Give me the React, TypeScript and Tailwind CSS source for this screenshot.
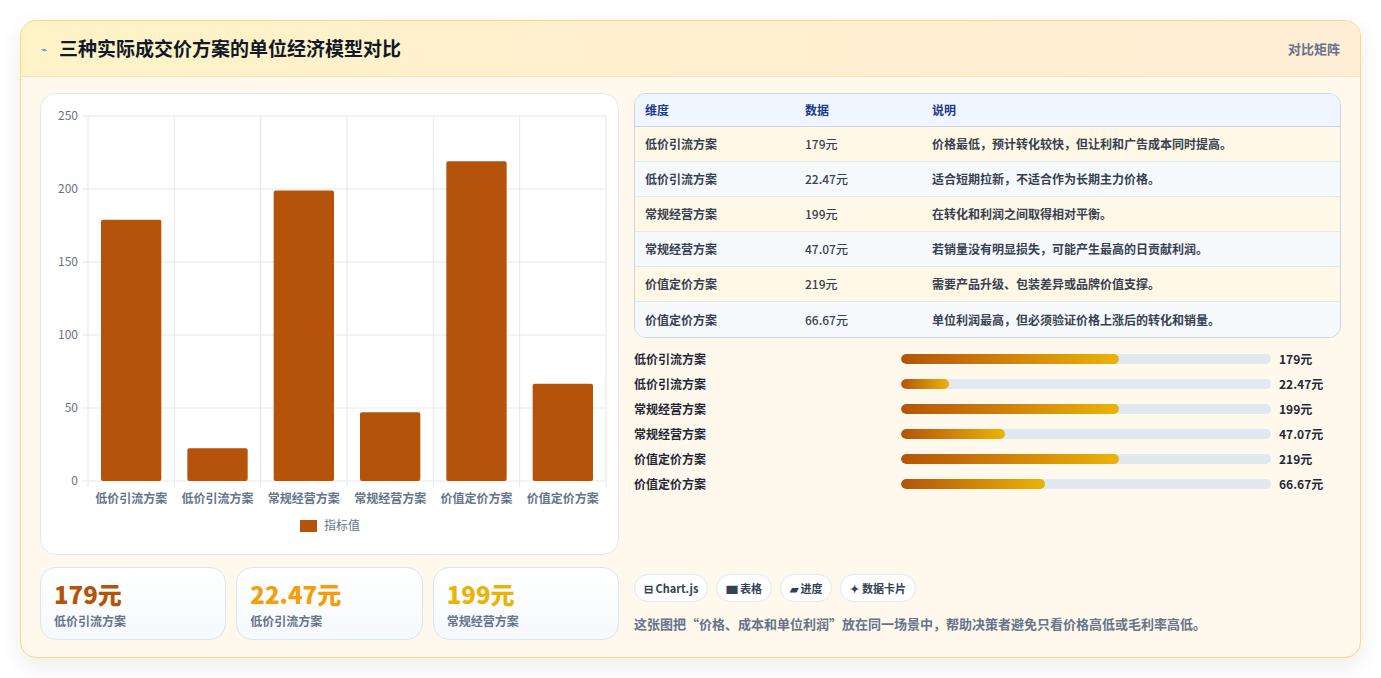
import React from 'react';

const font = { fontFamily: '"Noto Sans CJK SC", "Noto Sans", sans-serif' };

const rows = [
  { name: '低价引流方案', value: '179元', note: '价格最低，预计转化较快，但让利和广告成本同时提高。', n: 179, pct: 59 },
  { name: '低价引流方案', value: '22.47元', note: '适合短期拉新，不适合作为长期主力价格。', n: 22.47, pct: 13 },
  { name: '常规经营方案', value: '199元', note: '在转化和利润之间取得相对平衡。', n: 199, pct: 59 },
  { name: '常规经营方案', value: '47.07元', note: '若销量没有明显损失，可能产生最高的日贡献利润。', n: 47.07, pct: 28 },
  { name: '价值定价方案', value: '219元', note: '需要产品升级、包装差异或品牌价值支撑。', n: 219, pct: 59 },
  { name: '价值定价方案', value: '66.67元', note: '单位利润最高，但必须验证价格上涨后的转化和销量。', n: 66.67, pct: 39 },
];

const BarChart: React.FC = () => {
  const left = 47, right = 565, top = 22, bottom = 387;
  const h = bottom - top;
  const step = (right - left) / 6;
  const ticks = [0, 50, 100, 150, 200, 250];
  return (
    <svg width="578" height="461" className="block">
      {ticks.map(t => {
        const y = bottom - (t / 250) * h;
        return (
          <g key={t}>
            <line x1={left - 6} x2={right} y1={y} y2={y} stroke="#e5e7eb" />
            <text x={left - 10} y={y + 4} textAnchor="end" fontSize="12" fill="#6b7280" style={font}>{t}</text>
          </g>
        );
      })}
      {Array.from({ length: 7 }).map((_, i) => (
        <line key={i} x1={left + i * step} x2={left + i * step} y1={top} y2={bottom + 6} stroke="#e5e7eb" />
      ))}
      {rows.map((r, i) => {
        const bh = (r.n / 250) * h;
        const x = left + i * step + 13;
        return (
          <g key={i}>
            <rect x={x} y={bottom - bh} width={step - 26} height={bh} rx="2" fill="#b45309" />
            <text x={left + i * step + step / 2} y={bottom + 22} textAnchor="middle" fontSize="12" fontWeight="600" fill="#64748b" style={font}>{r.name}</text>
          </g>
        );
      })}
      <rect x="259" y="426" width="17" height="12" fill="#b45309" />
      <text x="283" y="436" fontSize="12" fill="#64748b" style={font}>指标值</text>
    </svg>
  );
};

const App: React.FC = () => {
  return (
    <div className="w-[1381px] h-[678px] bg-white pt-5 px-5" style={font}>
      <div className="w-[1341px] h-[638px] rounded-2xl border border-[#fcd97a] overflow-hidden shadow-[0_8px_24px_rgba(0,0,0,0.08)] bg-[#fff8ec] flex flex-col">
        <div className="h-[56px] shrink-0 flex items-center justify-between px-5 bg-gradient-to-r from-[#fef3c7] to-[#ffedd5] border-b border-[#f5e3c0]">
          <div className="flex items-center gap-3">
            <span className="text-[10px] text-[#3b82f6]">⌁</span>
            <h1 className="text-[19px] font-bold text-[#111827]">三种实际成交价方案的单位经济模型对比</h1>
          </div>
          <span className="text-[13px] font-semibold text-[#64748b]">对比矩阵</span>
        </div>
        <div className="flex gap-[15px] px-[19px] pt-4">
          <div className="w-[579px] flex flex-col gap-3">
            <div className="h-[462px] bg-white rounded-2xl border border-[#e2e8f0]">
              <BarChart />
            </div>
            <div className="grid grid-cols-3 gap-[10px]">
              {[
                { v: '179元', c: 'text-[#b45309]', l: '低价引流方案' },
                { v: '22.47元', c: 'text-[#f59e0b]', l: '低价引流方案' },
                { v: '199元', c: 'text-[#eab308]', l: '常规经营方案' },
              ].map((k, i) => (
                <div key={i} className="h-[73px] rounded-2xl border border-[#dbe4f0] bg-gradient-to-b from-white to-[#f6f9fc] px-[13px] pt-[10px]">
                  <div className={`text-[24px] font-extrabold leading-8 ${k.c}`}>{k.v}</div>
                  <div className="text-[12px] font-semibold text-[#64748b] mt-0.5">{k.l}</div>
                </div>
              ))}
            </div>
          </div>
          <div className="flex-1 flex flex-col">
            <div className="rounded-xl border border-[#cbd5e1] overflow-hidden">
              <div className="h-[33px] flex items-center bg-[#eff6ff] border-b border-[#cbd5e1] text-[12px] font-semibold text-[#1e3a8a]">
                <span className="w-[170px] pl-[10px]">维度</span>
                <span className="w-[127px]">数据</span>
                <span>说明</span>
              </div>
              {rows.map((r, i) => (
                <div key={i} className={`h-[35px] flex items-center text-[12px] font-semibold text-[#374151] ${i % 2 === 0 ? 'bg-[#fff8e6]' : 'bg-[#f7fafc]'} ${i < 5 ? 'border-b border-[#e2e8f0]' : ''}`}>
                  <span className="w-[170px] pl-[10px]">{r.name}</span>
                  <span className="w-[127px] font-medium">{r.value}</span>
                  <span>{r.note}</span>
                </div>
              ))}
            </div>
            <div className="flex flex-col mt-[8px]">
              {rows.map((r, i) => (
                <div key={i} className="h-[25px] flex items-center text-[12px] font-semibold text-[#1f2937]">
                  <span className="w-[267px]">{r.name}</span>
                  <div className="w-[370px] h-[10px] rounded-full bg-[#e2e8f0] overflow-hidden">
                    <div className="h-full rounded-full bg-gradient-to-r from-[#b45309] to-[#eab308]" style={{ width: `${r.pct}%` }} />
                  </div>
                  <span className="ml-2 font-bold text-[#1f2937]">{r.value}</span>
                </div>
              ))}
            </div>
            <div className="flex gap-2 mt-[78px]">
              {['⊟ Chart.js', '▆ 表格', '▰ 进度', '✦ 数据卡片'].map(c => (
                <span key={c} className="h-[28px] px-[9px] flex items-center rounded-full border border-[#e2e8f0] bg-white text-[11px] font-semibold text-[#334155]">{c}</span>
              ))}
            </div>
            <p className="mt-[12px] text-[13px] font-semibold text-[#64748b]">这张图把“价格、成本和单位利润”放在同一场景中，帮助决策者避免只看价格高低或毛利率高低。</p>
          </div>
        </div>
      </div>
    </div>
  );
};

export default App;
